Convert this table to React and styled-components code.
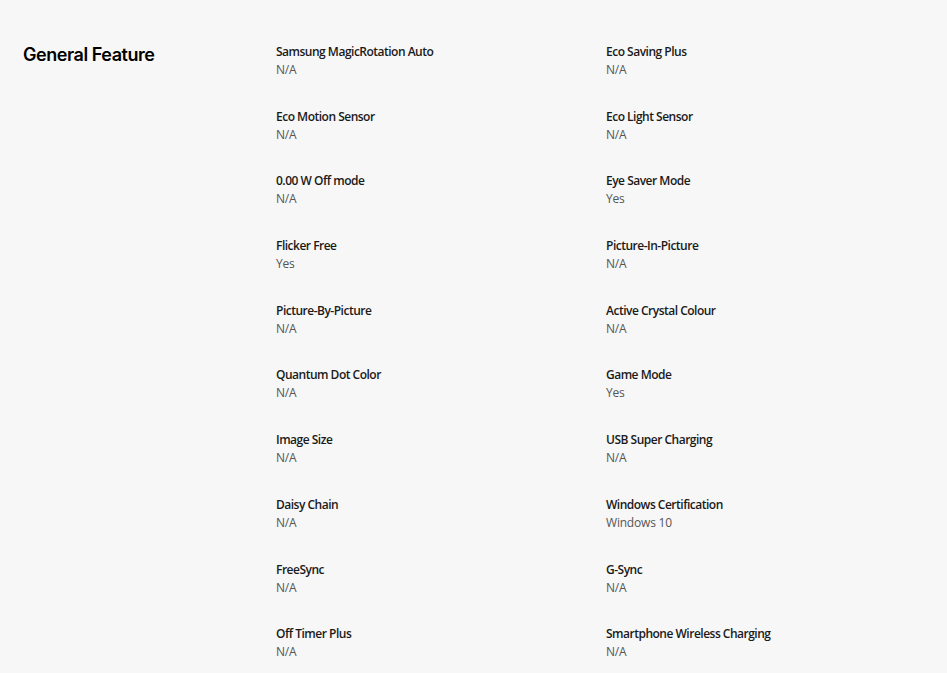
import React from "react";
import styled, { createGlobalStyle } from "styled-components";

const GlobalStyle = createGlobalStyle`
  html, body {
    margin: 0;
    background-color: #f7f7f7;
  }
`;

const Section = styled.section`
  display: flex;
  min-height: 673px;
  padding-top: 42px;
  padding-left: 23px;
  box-sizing: border-box;
  background-color: #f7f7f7;
`;

const Title = styled.h2`
  width: 253px;
  margin: 0;
  padding-top: 1px;
  color: #000;
  font-family: Inter, "Liberation Sans", sans-serif;
  font-size: 18px;
  font-weight: 600;
  letter-spacing: -0.45px;
  line-height: 24px;
`;

const Specs = styled.ul`
  display: grid;
  grid-template-columns: 330px 330px;
  grid-auto-rows: 64.7px;
  margin: 0;
  padding: 1px 0 0;
  list-style-type: none;
`;

const Spec = styled.li`
  font-family: "Open Sans", "Liberation Sans", sans-serif;
  font-size: 12px;
  line-height: 18px;
`;

const Label = styled.div`
  color: #1a1a1a;
  font-weight: 600;
  letter-spacing: -0.5px;
`;

const Value = styled.div`
  color: #555;
  letter-spacing: -0.2px;
`;

const specs = [
  ["Samsung MagicRotation Auto", "N/A"],
  ["Eco Saving Plus", "N/A"],
  ["Eco Motion Sensor", "N/A"],
  ["Eco Light Sensor", "N/A"],
  ["0.00 W Off mode", "N/A"],
  ["Eye Saver Mode", "Yes"],
  ["Flicker Free", "Yes"],
  ["Picture-In-Picture", "N/A"],
  ["Picture-By-Picture", "N/A"],
  ["Active Crystal Colour", "N/A"],
  ["Quantum Dot Color", "N/A"],
  ["Game Mode", "Yes"],
  ["Image Size", "N/A"],
  ["USB Super Charging", "N/A"],
  ["Daisy Chain", "N/A"],
  ["Windows Certification", "Windows 10"],
  ["FreeSync", "N/A"],
  ["G-Sync", "N/A"],
  ["Off Timer Plus", "N/A"],
  ["Smartphone Wireless Charging", "N/A"],
];

export default function App() {
  return (
    <>
      <GlobalStyle />
      <Section>
        <Title>General Feature</Title>
        <Specs>
          {specs.map(([label, value]) => (
            <Spec key={label}>
              <Label>{label}</Label>
              <Value>{value}</Value>
            </Spec>
          ))}
        </Specs>
      </Section>
    </>
  );
}
